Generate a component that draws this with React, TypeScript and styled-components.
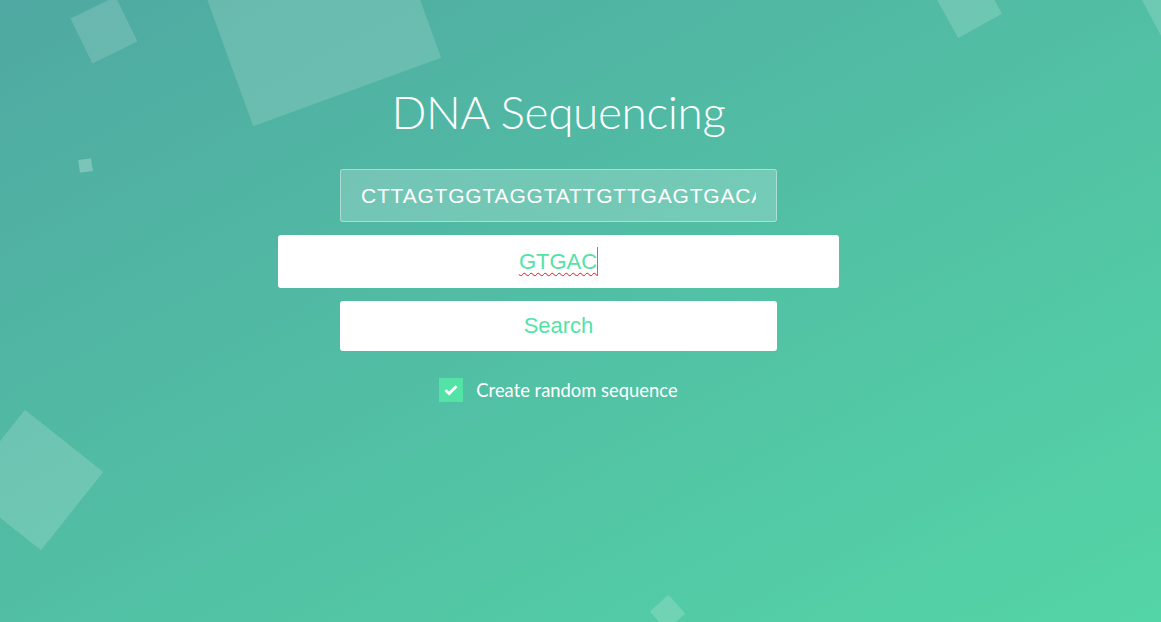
import React from "react";
import styled, { createGlobalStyle } from "styled-components";

const Global = createGlobalStyle`
  html, body { margin: 0; padding: 0; height: 100%; }
  body {
    overflow: hidden;
    font-family: "Lato", "Open Sans", sans-serif;
  }
  #root { height: 100%; }
`;

const Page = styled.div`
  position: relative;
  width: 100%;
  height: 622px;
  overflow: hidden;
  background: linear-gradient(to bottom right, #4fa9a2 0%, #54d5a6 100%);
  box-sizing: border-box;
  padding: 82px 44px 0 0;
`;

const Shapes = styled.div`
  position: absolute;
  inset: 0;
  pointer-events: none;
`;

const Square = styled.span<{ $alpha: number }>`
  position: absolute;
  display: block;
  background: rgba(255, 255, 255, ${(p) => p.$alpha});
`;

const Content = styled.main`
  position: relative;
  display: flex;
  flex-direction: column;
  align-items: center;
`;

const Title = styled.h1`
  margin: 0 0 27px;
  font-family: "Lato", "Open Sans", sans-serif;
  font-weight: 300;
  font-size: 46px;
  line-height: 60px;
  color: #fff;
  letter-spacing: -0.4px;
`;

const Form = styled.form`
  display: flex;
  flex-direction: column;
  align-items: center;
  gap: 13px;
`;

const SequenceInput = styled.input`
  box-sizing: border-box;
  width: 437px;
  height: 53px;
  padding: 0 20px;
  border: 1px solid rgba(255, 255, 255, 0.4);
  border-radius: 3px;
  background: rgba(255, 255, 255, 0.2);
  color: #fff;
  font-family: "Liberation Sans", Arial, sans-serif;
  font-size: 21px;
  letter-spacing: 0.8px;
  outline: none;
`;

const QueryField = styled.div`
  box-sizing: border-box;
  width: 561px;
  height: 53px;
  display: flex;
  align-items: center;
  justify-content: center;
  border-radius: 3px;
  background: #fff;
  color: #53e3a6;
  font-family: "Liberation Sans", Arial, sans-serif;
  font-size: 22px;
`;

const Misspelled = styled.span`
  text-decoration: underline wavy #e8141c;
  text-decoration-thickness: 1px;
  text-underline-offset: 3px;
`;

const Caret = styled.span`
  display: inline-block;
  width: 1px;
  height: 29px;
  background: #3aa88a;
`;

const SearchButton = styled.button`
  box-sizing: border-box;
  width: 437px;
  height: 50px;
  border: none;
  border-radius: 3px;
  background: #fff;
  color: #53e3a6;
  font-family: "Liberation Sans", Arial, sans-serif;
  font-size: 22px;
  cursor: pointer;
  padding: 0;
`;

const CheckRow = styled.label`
  margin-top: 14px;
  display: flex;
  align-items: center;
  gap: 13px;
  color: #fff;
  font-family: "Lato", "Open Sans", sans-serif;
  font-size: 18.4px;
  font-weight: 400;
  cursor: pointer;
`;

const Box = styled.span`
  width: 24px;
  height: 24px;
  display: flex;
  align-items: center;
  justify-content: center;
  background: #53e3a6;
`;

const squares = [
  { cx: 104, cy: 30, s: 50, r: -26, a: 0.15 },
  { cx: 313, cy: -2, s: 200, r: -20, a: 0.15 },
  { cx: 85, cy: 165, s: 13, r: -8, a: 0.25 },
  { cx: 968, cy: 4, s: 50, r: -29, a: 0.17 },
  { cx: 1182, cy: -10, s: 80, r: -28, a: 0.17 },
  { cx: 33, cy: 480, s: 100, r: 38.5, a: 0.17 },
  { cx: 667, cy: 612, s: 25, r: -42, a: 0.17 },
];

export default function App() {
  return (
    <>
      <Global />
      <Page>
        <Shapes>
          {squares.map((q, i) => (
            <Square
              key={i}
              $alpha={q.a}
              style={{
                left: q.cx - q.s / 2,
                top: q.cy - q.s / 2,
                width: q.s,
                height: q.s,
                transform: `rotate(${q.r}deg)`,
              }}
            />
          ))}
        </Shapes>
        <Content>
          <Title>DNA Sequencing</Title>
          <Form onSubmit={(e) => e.preventDefault()}>
            <SequenceInput
              readOnly
              value="CTTAGTGGTAGGTATTGTTGAGTGACAGTCCATGGATCAAGTCGATTACG"
            />
            <QueryField role="textbox">
              <Misspelled>GTGAC</Misspelled>
              <Caret />
            </QueryField>
            <SearchButton type="submit">Search</SearchButton>
            <CheckRow>
              <Box>
                <svg width="14" height="12" viewBox="0 0 14 12">
                  <path d="M1.5 6.2 L5.2 9.6 L12.5 2.2" fill="none" stroke="#fff" strokeWidth="2.8" />
                </svg>
              </Box>
              Create random sequence
            </CheckRow>
          </Form>
        </Content>
      </Page>
    </>
  );
}
